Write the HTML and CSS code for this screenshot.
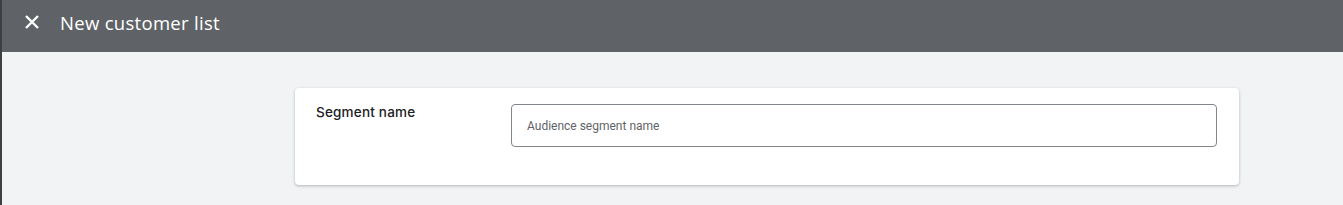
FILE: index.html
```html
<!DOCTYPE html>
<html lang="en">
<head>
    <meta charset="UTF-8">
    <title>New customer list</title>
    <link rel="stylesheet" href="styles.css">
</head>
<body>
    <header class="topbar">
        <span class="close-btn">
            <svg width="14" height="14" viewBox="0 0 14 14"><path d="M1 1L13 13M13 1L1 13" stroke="#fff" stroke-width="2.4"/></svg>
        </span>
        <span class="title">New customer list</span>
    </header>

    <main class="content">
        <div class="card">
            <div class="label">Segment name</div>
            <input type="text" class="segment-input" placeholder="Audience segment name">
        </div>
    </main>
</body>
</html>
```

FILE: styles.css
```css
body {
    margin: 0;
    background-color: #f1f3f4;
    border-left: 2px solid #3c3f44;
    height: 205px;
    box-sizing: border-box;
    overflow: hidden;
    font-family: "Open Sans", Roboto, sans-serif;
}
.topbar {
    display: flex;
    align-items: center;
    height: 52px;
    background-color: #5f6368;
    color: white;
    padding-left: 23px;
    padding-bottom: 8px;
    box-sizing: border-box;
}
.close-btn {
    display: flex;
    width: 14px;
    height: 14px;
    margin-right: 21px;
}
.title {
    font-size: 18.5px;
    letter-spacing: 0.3px;
}
.content {
    padding-top: 36px;
    padding-left: 293px;
}
.card {
    display: flex;
    align-items: flex-start;
    width: 944px;
    height: 97px;
    box-sizing: border-box;
    padding: 16px 22px 0 21px;
    background-color: white;
    border-radius: 4px;
    box-shadow: 0 1px 3px rgba(60, 64, 67, 0.35);
}
.label {
    width: 195px;
    font-family: Inter, "Open Sans", sans-serif;
    font-size: 13.5px;
    font-weight: 500;
    letter-spacing: 0.2px;
    color: #202124;
}
.segment-input {
    flex: 1;
    height: 43px;
    box-sizing: border-box;
    border: 1px solid #80868b;
    border-radius: 4px;
    padding: 0 15px;
    font-family: Roboto, sans-serif;
    font-size: 12px;
    outline: none;
}
.segment-input::placeholder {
    color: #5f6368;
}
```
